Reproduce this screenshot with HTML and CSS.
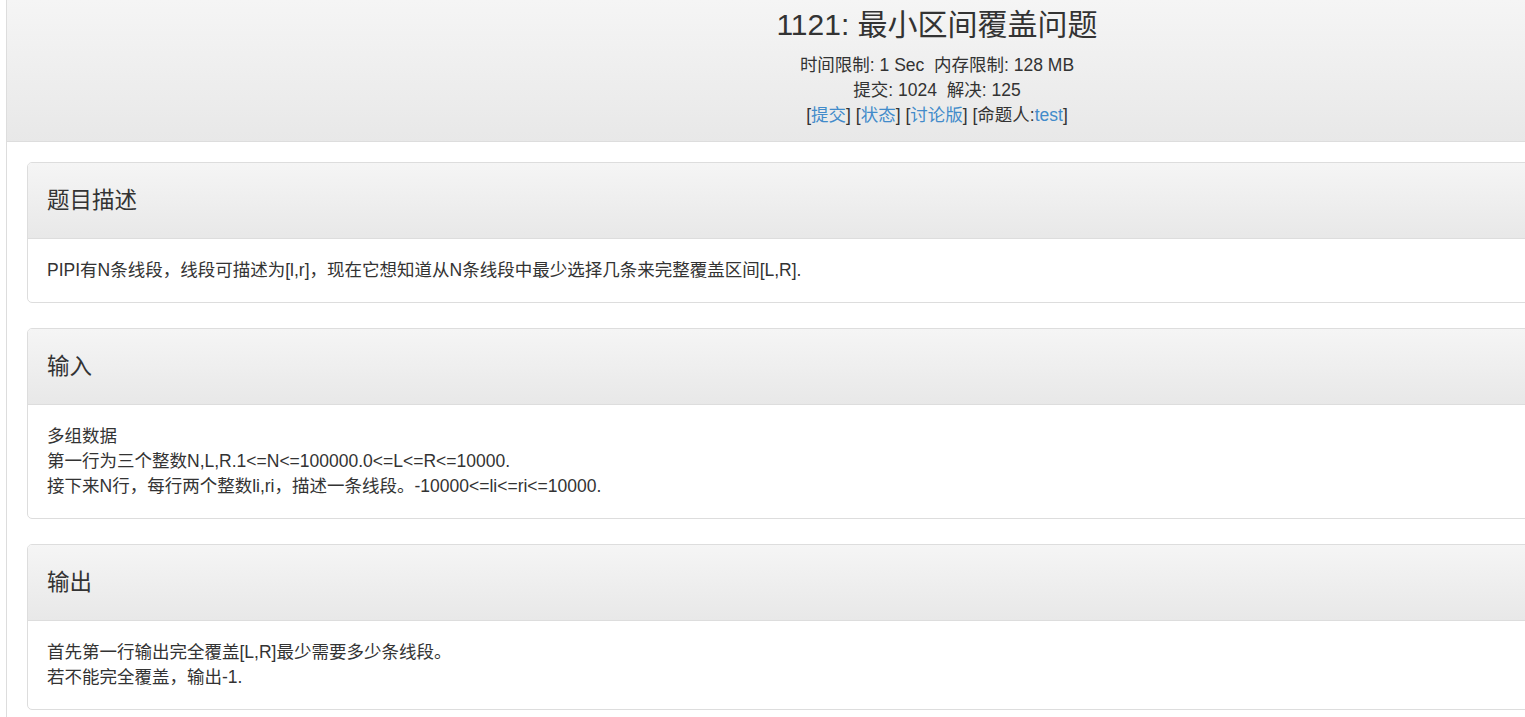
FILE: index.html
```html
<!DOCTYPE html>
<html lang="zh-CN">
<head>
    <meta charset="UTF-8">
    <meta name="viewport" content="width=device-width, initial-scale=1.0">
    <title>1121: 最小区间覆盖问题</title>
    <link rel="stylesheet" href="styles.css">
</head>
<body>

<div class="page">
    <div class="problem-header">
        <h2>1121: 最小区间覆盖问题</h2>
        <p>时间限制: 1 Sec&nbsp; 内存限制: 128 MB</p>
        <p>提交: 1024&nbsp; 解决: 125</p>
        <p>[<a href="#">提交</a>] [<a href="#">状态</a>] [<a href="#">讨论版</a>] [命题人:<a href="#">test</a>]</p>
    </div>

    <div class="content">
        <div class="panel">
            <div class="panel-heading">题目描述</div>
            <div class="panel-body">
                <p>PIPI有N条线段，线段可描述为[l,r]，现在它想知道从N条线段中最少选择几条来完整覆盖区间[L,R].</p>
            </div>
        </div>

        <div class="panel">
            <div class="panel-heading">输入</div>
            <div class="panel-body">
                <p>多组数据<br>第一行为三个整数N,L,R.1&lt;=N&lt;=100000.0&lt;=L&lt;=R&lt;=10000.<br>接下来N行，每行两个整数li,ri，描述一条线段。-10000&lt;=li&lt;=ri&lt;=10000.</p>
            </div>
        </div>

        <div class="panel">
            <div class="panel-heading">输出</div>
            <div class="panel-body">
                <p>首先第一行输出完全覆盖[L,R]最少需要多少条线段。<br>若不能完全覆盖，输出-1.</p>
            </div>
        </div>
    </div>
</div>

</body>
</html>
```

FILE: styles.css
```css
/* Global */
html, body {
    margin: 0;
    padding: 0;
    overflow: hidden;
}

body {
    font-family: 'Liberation Sans', 'Noto Sans CJK SC', sans-serif;
    font-size: 17.5px;
    line-height: 25px;
    color: #333;
    background-color: #fff;
}

a {
    color: #428bca;
    text-decoration: none;
}

p {
    margin: 0;
}

.page {
    margin-left: 6px;
    width: 1860px;
    min-height: 100vh;
    border-left: 1px solid #ddd;
}

/* Problem header */
.problem-header {
    height: 142px;
    box-sizing: border-box;
    padding-top: 6px;
    text-align: center;
    background-image: linear-gradient(to bottom, #f5f5f5 0%, #e8e8e8 100%);
    border-bottom: 1px solid #ddd;
}

.problem-header h2 {
    margin: 0 0 10px;
    font-size: 30px;
    line-height: 37px;
    font-weight: normal;
}

/* Panels */
.content {
    padding: 20px;
}

.panel {
    margin-bottom: 25px;
    border: 1px solid #ddd;
    border-radius: 5px;
    overflow: hidden;
}

.panel-heading {
    height: 75px;
    display: flex;
    align-items: center;
    padding: 0 19px;
    font-size: 22.5px;
    background-image: linear-gradient(to bottom, #f5f5f5 0%, #e8e8e8 100%);
    border-bottom: 1px solid #ddd;
}

.panel-body {
    padding: 19px;
}
```
